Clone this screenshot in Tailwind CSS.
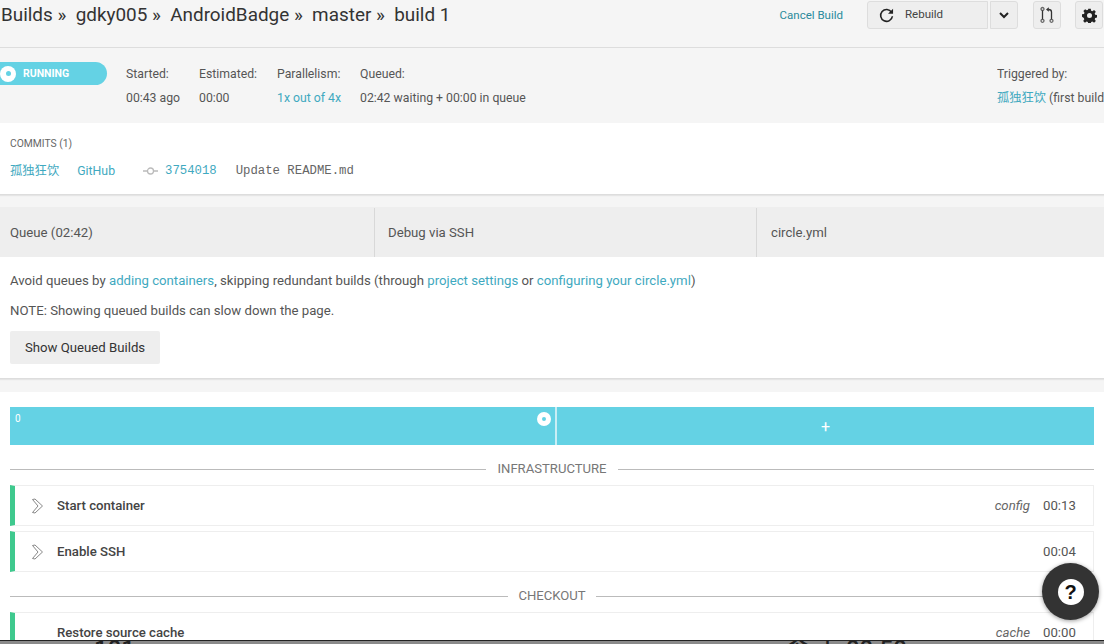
<!DOCTYPE html>
<html lang="en">
<head>
    <meta charset="utf-8" />
    <title>Build 1</title>
    <script src="https://cdn.jsdelivr.net/npm/@tailwindcss/browser@4"></script>
</head>
<body class="bg-[#f5f5f5] font-['Roboto','Noto_Sans_CJK_SC',sans-serif] text-[#555]">
<div class="relative w-[1104px] h-[644px] overflow-hidden">
    <!-- header -->
    <header class="h-[48px] flex items-start border-b border-[#ddd] bg-[#f5f5f5]">
        <h1 class="pl-[1px] pt-[3px] text-[18.9px] leading-[24px] text-[#333] whitespace-pre">Builds »  gdky005 »  AndroidBadge »  master »  build 1</h1>
        <div class="ml-auto flex items-start pt-[1px] shrink-0">
            <a class="mt-[7px] mr-[24px] text-[11.5px] leading-[14px] text-[#2a8a9c]">Cancel Build</a>
            <button class="w-[121px] h-[28px] flex items-center pl-[11px] bg-[#eee] border border-[#ddd] rounded-l-[3px] text-[11.5px] text-[#444]">
                <svg class="w-[15px] h-[15px] mr-[11px]" viewBox="0 0 16 16" fill="none" stroke="#222" stroke-width="1.7"><path d="M13.400 4.600A6.300 6.300 0 1 0 14.300 8.800"/><path d="M15 .8v5.400H9.600z" fill="#222" stroke="none"/></svg>
                Rebuild
            </button>
            <button class="w-[28px] h-[28px] ml-[2px] flex items-center justify-center bg-[#eee] border border-[#ddd] rounded-r-[3px]">
                <svg class="w-[10px] h-[7px]" viewBox="0 0 10 7" fill="none" stroke="#222" stroke-width="2"><path d="M1 1l4 4 4-4"/></svg>
            </button>
            <button class="w-[28px] h-[28px] ml-[15px] flex items-center justify-center bg-[#eee] border border-[#ddd] rounded-[3px]">
                <svg class="w-[14px] h-[18px]" viewBox="0 0 14 18" fill="none" stroke="#333" stroke-width="1.300"><circle cx="2.500" cy="14.800" r="1.500" stroke="#666"/><circle cx="11.500" cy="14.800" r="1.500" stroke="#666"/><circle cx="2.500" cy="3" r="1.500" stroke="#666"/><path d="M2.500 13.300V4.500M11.500 13.300V6Q11.500 3.500 8.500 3.500"/><path d="M8.800 1.200L6 3.500l2.800 2.300z" fill="#333" stroke="none"/></svg>
            </button>
            <button class="w-[28px] h-[28px] ml-[14px] mr-[1px] flex items-center justify-center bg-[#eee] border border-[#ddd] rounded-[3px]">
                <svg class="w-[15px] h-[15px]" viewBox="0 0 24 24" fill="#222"><path fill-rule="evenodd" d="M10 1h4l.6 3.200 2 .8 2.700-1.800 2.800 2.800-1.800 2.700.8 2 3.200.6v4l-3.200.6-.8 2 1.800 2.700-2.800 2.800-2.700-1.800-2 .8-.6 3.200h-4l-.6-3.200-2-.8-2.700 1.800-2.800-2.800 1.800-2.700-.8-2L0 14v-4l3.200-.6.8-2L2.200 4.700 5 1.900l2.700 1.800 2-.8zM12 8a4 4 0 1 0 0 8 4 4 0 0 0 0-8z"/></svg>
            </button>
        </div>
    </header>

    <!-- build status -->
    <section class="h-[75px] flex items-start pt-[14px] text-[12.25px] leading-[24px] whitespace-nowrap">
        <div class="w-[107px] h-[23px] flex items-center bg-[#64d2e4] rounded-r-full shrink-0">
            <span class="w-[16px] h-[16px] rounded-full bg-white flex items-center justify-center"><span class="w-[5px] h-[5px] rounded-full bg-[#64d2e4]"></span></span>
            <span class="ml-[7px] text-[10.5px] font-bold text-white">RUNNING</span>
        </div>
        <div class="ml-[19px] w-[73px]"><p>Started:</p><p>00:43 ago</p></div>
        <div class="w-[73px]"><p>Estimated:</p><p>00:00</p></div>
        <div class="w-[83px] ml-[5px]"><p>Parallelism:</p><p class="text-[#3fa9c0]">1x out of 4x</p></div>
        <div><p>Queued:</p><p>02:42 waiting + 00:00 in queue</p></div>
        <div class="ml-auto w-[107px] shrink-0 overflow-hidden"><p>Triggered by:</p><p><span class="text-[#3fa9c0]">孤独狂饮</span> (first build</p></div>
    </section>

    <!-- commits -->
    <section class="h-[72px] bg-white border-b border-[#ddd] shadow-[0_1px_1px_#e5e5e5] px-[10px] pt-[15px]">
        <p class="text-[10.3px] leading-[12px] text-[#666]">COMMITS (1)</p>
        <div class="mt-[12px] flex items-center text-[12.3px] leading-[18px] whitespace-nowrap">
            <a class="text-[#3fa9c0]">孤独狂饮</a>
            <a class="ml-[18px] text-[#3fa9c0]">GitHub</a>
            <svg class="ml-[28px] w-[15px] h-[8px]" viewBox="0 0 15 8" fill="none" stroke="#bbb" stroke-width="1.300"><circle cx="7.500" cy="4" r="3"/><path d="M0 4h4.500M10.500 4H15"/></svg>
            <a class="ml-[7px] font-['Liberation_Mono',monospace] text-[12.3px] text-[#3fa9c0]">3754018</a>
            <span class="ml-[19px] font-['Liberation_Mono',monospace] text-[12.3px] text-[#666]">Update README.md</span>
        </div>
    </section>

    <!-- tabs -->
    <nav class="mt-[12px] h-[50px] flex bg-[#eee] text-[13.2px] items-stretch pt-[1px]">
        <div class="w-[375px] pl-[10px] flex items-center border-r border-[#d8d8d8]">Queue (02:42)</div>
        <div class="w-[382px] pl-[13px] flex items-center border-r border-[#d8d8d8]">Debug via SSH</div>
        <div class="pl-[14px] flex items-center">circle.yml</div>
    </nav>

    <!-- queue notes -->
    <section class="h-[122px] bg-white border-b border-[#ddd] shadow-[0_1px_1px_#e5e5e5] px-[10px] pt-[15px] text-[13.2px] leading-[18px]">
        <p>Avoid queues by <a class="text-[#3fa9c0]">adding containers</a>, skipping redundant builds (through <a class="text-[#3fa9c0]">project settings</a> or <a class="text-[#3fa9c0]">configuring your circle.yml</a>)</p>
        <p class="mt-[12px]">NOTE: Showing queued builds can slow down the page.</p>
        <button class="mt-[11px] w-[150px] h-[33px] bg-[#eee] rounded-[2px] text-[13.2px] text-[#333]">Show Queued Builds</button>
    </section>

    <!-- containers and steps -->
    <section class="mt-[13px] h-[248px] bg-white px-[10px] pt-[15px]">
        <div class="h-[38px] flex bg-[#64d2e4] text-white w-[1084px]">
            <div class="relative w-[547px] border-r-2 border-[#c8eef5] text-[10px] pl-[5px] pt-[5px] leading-[14px]">0
                <span class="absolute right-[4px] top-[5px] w-[14px] h-[14px] rounded-full bg-white flex items-center justify-center"><span class="w-[4px] h-[4px] rounded-full bg-[#64d2e4]"></span></span>
            </div>
            <div class="flex-1 flex items-center justify-center text-[16px] pt-[1px]">+</div>
        </div>

        <div class="mt-[14px] h-[20px] flex items-center gap-[11px] text-[13.1px] text-[#777]">
            <span class="flex-1 h-px bg-[#bbb]"></span>INFRASTRUCTURE<span class="flex-1 h-px bg-[#bbb]"></span>
        </div>
        <div class="mt-[6px] h-[41px] flex items-center border border-[#eee] border-l-[5px] border-l-[#3fc98e] text-[13.2px] pr-[17px]">
            <svg class="ml-[16px] w-[13px] h-[16px]" viewBox="0 0 13 16" fill="none" stroke="#888"><path d="M1.500 1.500L4 1l7.500 7L4 15l-2.500-.5L7 8z"/></svg>
            <span class="ml-[13px] font-medium text-[#444]">Start container</span>
            <i class="ml-auto text-[#666]">config</i><span class="ml-[13px] w-[33px]">00:13</span>
        </div>
        <div class="mt-[5px] h-[41px] flex items-center border border-[#eee] border-l-[5px] border-l-[#3fc98e] text-[13.2px] pr-[17px]">
            <svg class="ml-[16px] w-[13px] h-[16px]" viewBox="0 0 13 16" fill="none" stroke="#888"><path d="M1.500 1.500L4 1l7.500 7L4 15l-2.500-.5L7 8z"/></svg>
            <span class="ml-[13px] font-medium text-[#444]">Enable SSH</span>
            <span class="ml-auto w-[33px]">00:04</span>
        </div>
        <div class="mt-[14px] h-[20px] flex items-center gap-[10px] text-[13.1px] text-[#777]">
            <span class="flex-1 h-px bg-[#bbb]"></span>CHECKOUT<span class="flex-1 h-px bg-[#bbb]"></span>
        </div>
        <div class="mt-[6px] h-[41px] flex items-start pt-[10px] border border-[#eee] border-l-[5px] border-l-[#3fc98e] text-[13.2px] pr-[17px]">
            <span class="ml-[42px] font-medium text-[#444]">Restore source cache</span>
            <i class="ml-auto text-[#666]">cache</i><span class="ml-[13px] w-[33px]">00:00</span>
        </div>
    </section>

    <!-- help button -->
    <button class="absolute left-[1042px] top-[563px] w-[57px] h-[57px] rounded-full bg-[#333] shadow-[0_1px_4px_rgba(0,0,0,.4)] flex items-center justify-center">
        <span class="w-[26px] h-[26px] rounded-full bg-white flex items-center justify-center font-['Liberation_Sans',sans-serif] text-[20px] font-bold leading-none text-[#111]">?</span>
    </button>
    <!-- window behind, only the top edge shows -->
    <div class="absolute left-0 right-0 top-[640px] h-[4px] bg-[#8a8a8a] border-t border-[#222] overflow-hidden text-[#222] text-[24px] leading-[30px] font-medium">
        <span class="absolute left-[94px] -top-[7px]">101</span>
        <span class="absolute left-[786px] -top-[7px]">令 下 00:50</span>
    </div>
</div>
</body>
</html>
